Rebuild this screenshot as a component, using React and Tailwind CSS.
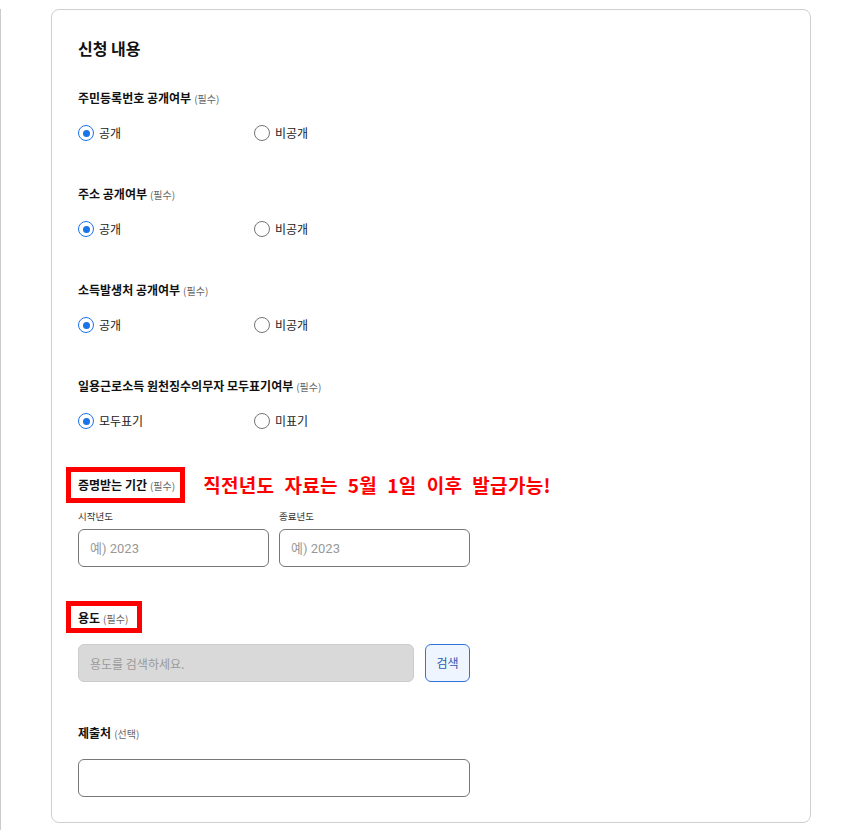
const font = { fontFamily: '"Noto Sans CJK KR", "Noto Sans", sans-serif' };

function Label({ title, note = "필수", markClass }) {
  return (
    <div className="relative flex h-5 items-center self-start">
      <span className="text-[12px] font-bold text-[#111]">{title}</span>
      <span className="ml-[3px] text-[10px] text-[#666]">({note})</span>
      {markClass && (
        <span className={"pointer-events-none absolute -left-[12px] border-[5px] border-[#ff0000] " + markClass} />
      )}
    </div>
  );
}

function Radio({ label, checked }) {
  return (
    <label className="flex h-5 w-[176px] items-center gap-[5px] text-[12px] text-[#222]">
      {checked ? (
        <span className="flex h-4 w-4 items-center justify-center rounded-full border-[1.5px] border-[#1a73e8]">
          <span className="h-[7px] w-[7px] rounded-full bg-[#1a73e8]" />
        </span>
      ) : (
        <span className="h-4 w-4 rounded-full border-[1.5px] border-[#757575]" />
      )}
      {label}
    </label>
  );
}

function RadioSection({ title, options }) {
  return (
    <div className="flex flex-col">
      <Label title={title} />
      <div className="mt-[15px] flex">
        <Radio label={options[0]} checked />
        <Radio label={options[1]} />
      </div>
    </div>
  );
}

export default function App() {
  return (
    <div className="min-h-[830px] w-[846px] border-l border-[#ccc] bg-white" style={font}>
      <div className="ml-[50px] mt-[9px] w-[760px] rounded-lg border border-[#cfcfcf] pl-[26px] pr-[27px] pb-[25px] pt-[26px]">
        <h2 className="h-6 text-[16px] font-bold leading-6 text-[#111]">신청 내용</h2>

        <div className="mt-[28px] flex flex-col gap-[41px]">
          <RadioSection title="주민등록번호 공개여부" options={["공개", "비공개"]} />
          <RadioSection title="주소 공개여부" options={["공개", "비공개"]} />
          <RadioSection title="소득발생처 공개여부" options={["공개", "비공개"]} />
          <RadioSection title="일용근로소득 원천징수의무자 모두표기여부" options={["모두표기", "미표기"]} />

          <div className="mt-[3px] flex flex-col">
            <div className="flex h-5 items-center">
              <Label title="증명받는 기간" markClass="-top-[8px] -bottom-[8px] -right-[10px]" />
              <span className="ml-[28px] text-[19px] font-bold leading-5 tracking-[0.3px] text-[#ff0000] [word-spacing:5.5px]">
                직전년도 자료는 5월 1일 이후 발급가능!
              </span>
            </div>
            <div className="mt-[13px] flex gap-[10px]">
              {["시작년도", "종료년도"].map((t) => (
                <div key={t} className="flex flex-col">
                  <span className="h-4 text-[9.5px] leading-4 text-[#333]">{t}</span>
                  <input
                    placeholder="예) 2023"
                    className="mt-[5px] h-[38px] w-[191px] rounded-md border border-[#777] px-[11px] text-[13px] text-[#222] outline-none placeholder:text-[#999]"
                    style={{ fontFamily: 'Roboto, "Noto Sans CJK KR", sans-serif' }}
                  />
                </div>
              ))}
            </div>
          </div>

          <div className="flex flex-col">
            <Label title="용도" markClass="-top-[7px] -bottom-[5px] -right-[14px]" />
            <div className="mt-[16px] flex gap-[11px]">
              <input
                disabled
                placeholder="용도를 검색하세요."
                className="h-[38px] w-[336px] rounded-md border border-[#ccc] bg-[#d9d9d9] px-[11px] text-[12px] placeholder:text-[#999]"
              />
              <button className="h-[38px] w-[45px] rounded-md border border-[#2f74e0] bg-[#eef5ff] text-[12px] text-[#2a5bb0]">
                검색
              </button>
            </div>
          </div>

          <div className="flex flex-col">
            <Label title="제출처" note="선택" />
            <input className="mt-[16px] h-[38px] w-[392px] rounded-md border border-[#777] px-[11px] text-[12px] outline-none" />
          </div>
        </div>
      </div>
    </div>
  );
}
